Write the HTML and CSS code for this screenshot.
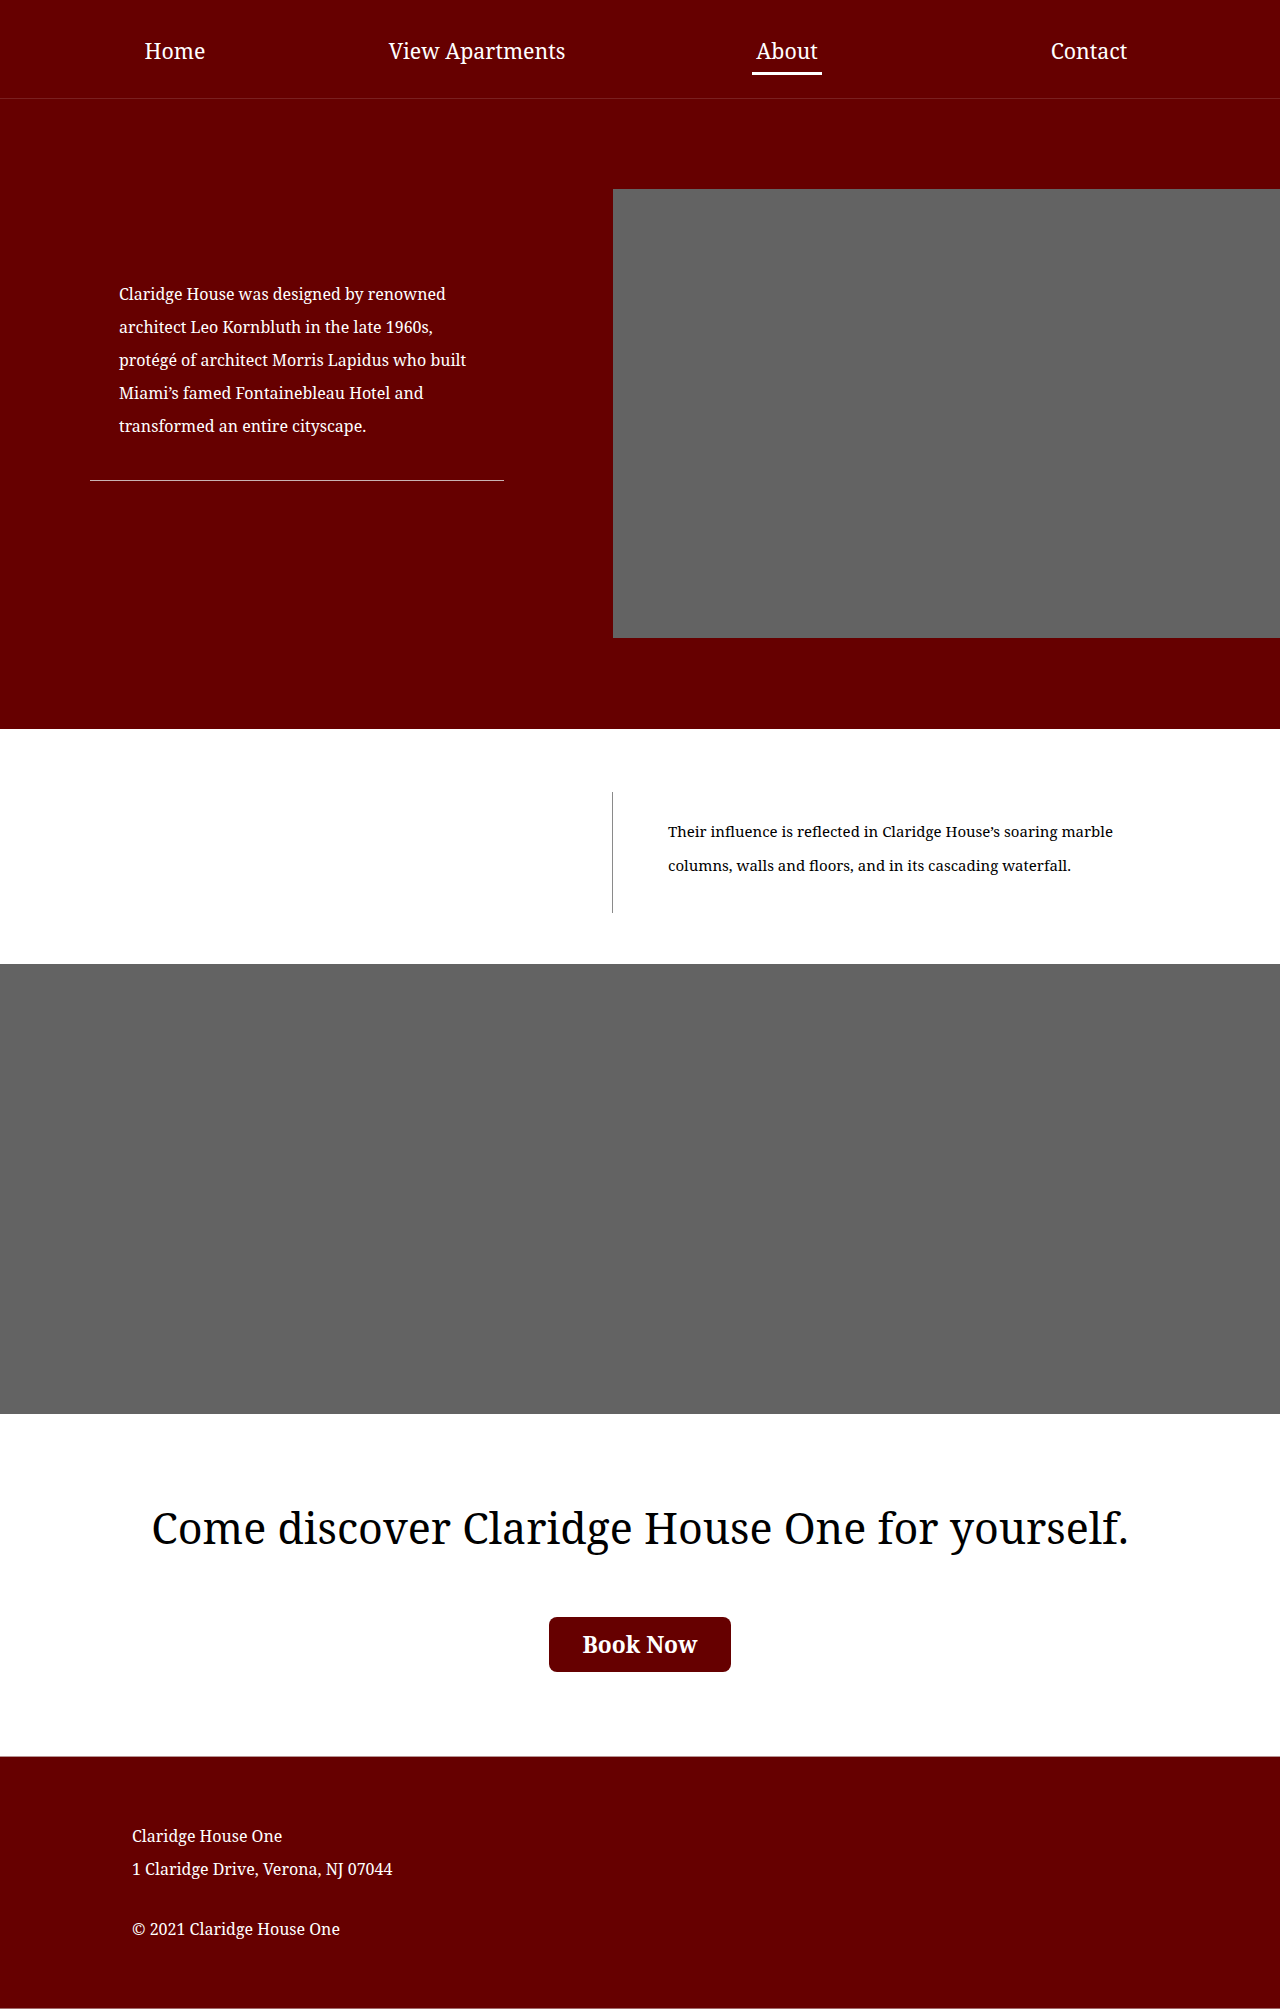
FILE: index.html
```html
<!DOCTYPE html>
<html lang="en">
<head>
<meta charset="utf-8">
<title>About - Claridge House One</title>
<link rel="stylesheet" href="styles.css">
</head>
<body>
<header class="site-header">
  <nav class="main-nav">
    <a class="nav-link" href="#">Home</a>
    <a class="nav-link" href="#">View Apartments</a>
    <a class="nav-link nav-link--active" href="#">About</a>
    <a class="nav-link" href="#">Contact</a>
  </nav>
</header>

<section class="hero">
  <div class="hero-text">
    <p class="hero-copy">Claridge House was designed by renowned architect Leo Kornbluth in the late 1960s, protégé of architect Morris Lapidus who built Miami’s famed Fontainebleau Hotel and transformed an entire cityscape.</p>
    <hr class="hero-rule">
  </div>
  <div class="hero-image"></div>
</section>

<section class="influence">
  <div class="influence-spacer"></div>
  <div class="influence-line"></div>
  <p class="influence-copy">Their influence is reflected in Claridge House’s soaring marble columns, walls and floors, and in its cascading waterfall.</p>
</section>

<div class="wide-image"></div>

<section class="cta">
  <h2 class="cta-title">Come discover Claridge House One for yourself.</h2>
  <a class="cta-button" href="#">Book Now</a>
</section>

<footer class="site-footer">
  <p class="footer-line">Claridge House One</p>
  <p class="footer-line">1 Claridge Drive, Verona, NJ 07044</p>
  <p class="footer-line footer-copy">© 2021 Claridge House One</p>
</footer>
</body>
</html>
```

FILE: styles.css
```css
* { box-sizing: border-box; }

html, body {
  margin: 0;
  padding: 0;
}

body {
  font-family: "Noto Serif", "DejaVu Serif", "Liberation Serif", serif;
  color: #000;
  background: #fff;
}

.site-header {
  background: #660000;
  height: 99px;
  border-bottom: 1px solid #7a2020;
}

.main-nav {
  display: flex;
  height: 98px;
  padding: 0 40px 0 24px;
  align-items: flex-start;
}

.nav-link {
  flex: 1;
  text-align: center;
  color: #fff;
  text-decoration: none;
  font-size: 21.33px;
  line-height: 32px;
  padding-top: 35px;
}

.nav-link--active {
  padding-left: 8px;
}

.nav-link--active::after {
  content: "";
  display: block;
  width: 70px;
  height: 3px;
  margin: 5px auto 0;
  background: #fff;
}

.hero {
  background: #660000;
  display: flex;
  height: 630px;
}

.hero-text {
  width: 613px;
  padding: 179px 0 0 90px;
}

.hero-copy {
  margin: 0;
  padding: 0 30px 0 29px;
  width: 414px;
  color: #fff;
  font-size: 16px;
  line-height: 33px;
}

.hero-rule {
  margin: 37px 0 0;
  width: 414px;
  border: 0;
  height: 1px;
  background: #c9b3b3;
}

.hero-image {
  flex: 1;
  margin-top: 90px;
  height: 449px;
  background: #636363;
}

.influence {
  display: flex;
  align-items: center;
  height: 235px;
  padding: 63px 0 51px;
}

.influence-spacer {
  width: 612px;
}

.influence-line {
  width: 1px;
  height: 121px;
  background: #8a8a8a;
}

.influence-copy {
  margin: 0 0 9px 55px;
  width: 480px;
  font-size: 15px;
  line-height: 34.5px;
}

.wide-image {
  height: 450px;
  background: #636363;
}

.cta {
  height: 342px;
  display: flex;
  flex-direction: column;
  align-items: center;
  padding-top: 86px;
}

.cta-title {
  margin: 0;
  font-size: 43px;
  font-weight: 400;
  line-height: 56px;
}

.cta-button {
  margin-top: 61px;
  width: 182px;
  height: 55px;
  border-radius: 8px;
  background: #660000;
  color: #fff;
  font-size: 22.8px;
  font-weight: 700;
  line-height: 55px;
  text-align: center;
  text-decoration: none;
}

.site-footer {
  background: #660000;
  height: 253px;
  border-top: 1px solid #b89494;
  border-bottom: 1px solid #a26a6a;
  padding: 63px 0 0 132px;
}

.footer-line {
  margin: 0;
  color: #fff;
  font-size: 16px;
  line-height: 33px;
}

.footer-copy {
  margin-top: 27px;
}
```
